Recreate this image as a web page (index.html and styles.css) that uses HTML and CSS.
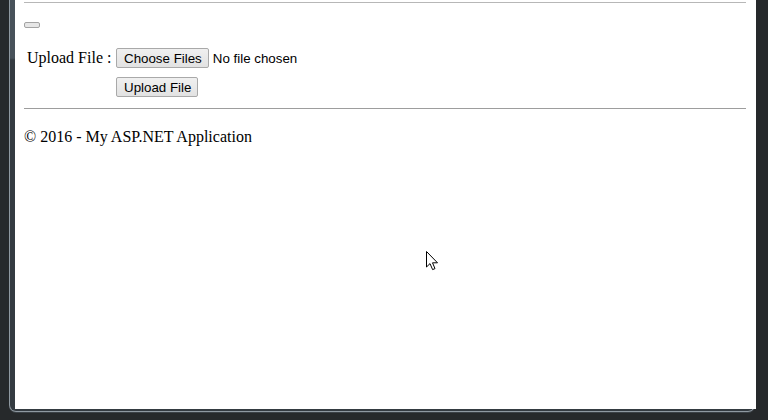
FILE: index.html
```html
<!DOCTYPE html>
<html lang="en">
<head>
    <meta charset="UTF-8">
    <title>Upload File - My ASP.NET Application</title>
    <link rel="stylesheet" href="styles.css">
</head>
<body>
    <div class="frame">
        <div class="bezel">
            <div class="window">
                <div class="page">
                    <div class="navline"></div>
                    <button class="empty-btn" type="button"></button>

                    <div class="upload-form">
                        <span class="label">Upload File :</span>
                        <div class="file-input">
                            <button class="btn" type="button">Choose Files</button>
                            <span class="file-name">No file chosen</span>
                        </div>
                        <span></span>
                        <div>
                            <button class="btn" type="button">Upload File</button>
                        </div>
                    </div>

                    <hr class="sep">
                    <footer>
                        <p>&copy; 2016 - My ASP.NET Application</p>
                    </footer>
                </div>

                <!-- mouse pointer -->
                <svg class="cursor" width="13" height="20" viewBox="0 0 13 20">
                    <path d="M0.5 0.5 L0.5 16 L4 12.6 L6.6 18.6 L9 17.6 L6.5 11.8 L11.5 11.8 Z" fill="#fff" stroke="#000" stroke-width="1" stroke-linejoin="miter"/>
                </svg>
            </div>
        </div>
    </div>
</body>
</html>
```

FILE: styles.css
```css
body {
    margin: 0;
    padding: 0;
    background-color: #26292b;
    overflow: hidden;
}

.frame {
    width: 768px;
    height: 420px;
    background-color: #26292b;
}

.bezel {
    margin-left: 9px;
    width: 746px;
    height: 412px;
    padding: 0 3px 1px 5px;
    background: linear-gradient(#48525a 0, #48525a 58px, #343b41 60px, #343b41 100%);
    border: 1px solid #8f99a1;
    border-top: none;
    border-radius: 0 0 7px 7px;
    box-sizing: border-box;
    box-shadow: 0 1px 0 #3b4146;
}

.window {
    position: relative;
    width: 741px;
    height: 409px;
    background-color: #fff;
}

.page {
    padding: 0 10px 0 9px;
    font-family: "Liberation Serif", "Times New Roman", serif;
    font-size: 16px;
    color: #000;
}

.navline {
    padding-top: 2px;
    border-bottom: 1px solid #b7b7b7;
}

.empty-btn {
    display: block;
    margin: 19px 0 0 0;
    width: 16px;
    height: 6px;
    padding: 0;
    background-color: #e6e6e6;
    border: 1px solid #a3a3a3;
    border-radius: 2px;
}

.upload-form {
    display: grid;
    grid-template-columns: 89px auto;
    row-gap: 9px;
    margin: 20px 0 0 3px;
    align-items: center;
}

.label {
    line-height: 20px;
}

.file-input {
    display: flex;
    align-items: center;
    gap: 4px;
}

.btn {
    height: 20px;
    padding: 0 6px 0 7px;
    font-family: "Liberation Sans", Arial, sans-serif;
    font-size: 13.33px;
    color: #000;
    background: linear-gradient(#f0f0f0, #e2e2e2);
    border: 1px solid #a9a9a9;
    border-radius: 2px;
    box-sizing: border-box;
}

.file-name {
    font-family: "Liberation Sans", Arial, sans-serif;
    font-size: 13.33px;
}

.sep {
    margin: 11px 0 0 0;
    border: none;
    border-top: 1px solid #9d9d9d;
    height: 0;
}

footer p {
    margin: 19px 0 0 0;
    line-height: 18px;
}

.cursor {
    position: absolute;
    left: 411px;
    top: 251px;
}
```
